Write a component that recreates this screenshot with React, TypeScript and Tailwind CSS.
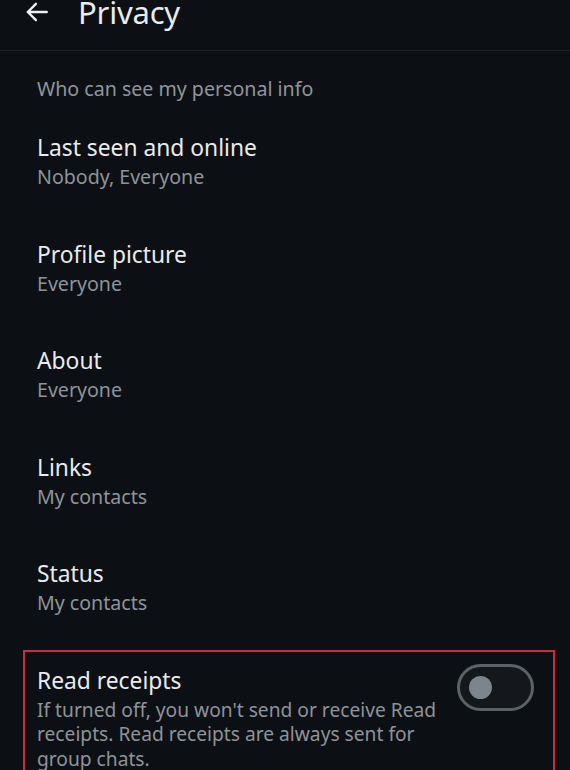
import React from "react";

const rows = [
  { title: "Last seen and online", sub: "Nobody, Everyone" },
  { title: "Profile picture", sub: "Everyone" },
  { title: "About", sub: "Everyone" },
  { title: "Links", sub: "My contacts" },
  { title: "Status", sub: "My contacts" },
];

export default function App() {
  return (
    <div
      className="w-[570px] h-[770px] overflow-hidden bg-[#0c1014] text-[#e9ebed]"
      style={{ fontFamily: '"Noto Sans", "Open Sans", sans-serif' }}
    >
      <div className="h-[51px] border-b border-[#1c2126] flex items-start overflow-hidden">
        <div className="flex items-center -mt-[9px] h-[42px]">
          <svg
            className="ml-[24px] w-[26px] h-[26px]"
            viewBox="0 0 24 24"
            fill="none"
            stroke="#eef0f2"
            strokeWidth="2.2"
            strokeLinecap="round"
            strokeLinejoin="round"
          >
            <path d="M21 12H3.5M11 4.5 3.5 12l7.5 7.5" />
          </svg>
          <span className="ml-[28px] text-[31px] leading-[42px] tracking-[-0.2px]">Privacy</span>
        </div>
      </div>
      <div className="pt-[24px]">
        <div className="px-[37px] text-[19.6px] leading-[28px] text-[#90959b]">
          Who can see my personal info
        </div>
        <div className="mt-[30px]">
          {rows.map((r) => (
            <div key={r.title} className="h-[106.6px] px-[37px]">
              <div className="text-[22.8px] leading-[30px]">{r.title}</div>
              <div className="text-[19.6px] leading-[28px] text-[#8e9399]">{r.sub}</div>
            </div>
          ))}
        </div>
        <div className="-mt-[16px] ml-[23px] mr-[15px] border-2 border-b-0 border-[#cf2a3c] pt-[14px] pl-[12px] pr-[19px] flex items-start">
          <div className="flex-1">
            <div className="text-[22.8px] leading-[30px]">Read receipts</div>
            <div className="mt-[2px] text-[19.2px] leading-[24.5px] text-[#8e9399] w-[410px]">
              If turned off, you won't send or receive Read receipts. Read receipts are always sent for group chats.
            </div>
          </div>
          <div className="mt-[-2px] w-[77px] h-[47px] rounded-full border-[3px] border-[#5c6166] bg-[#14181c] flex items-center pl-[9px]">
            <div className="w-[23px] h-[23px] rounded-full bg-[#7d848b]" />
          </div>
        </div>
      </div>
    </div>
  );
}
